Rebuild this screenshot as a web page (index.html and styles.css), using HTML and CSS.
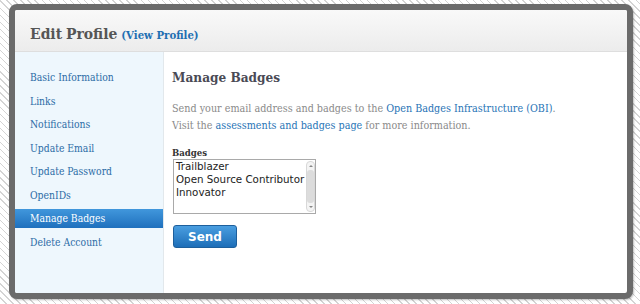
FILE: index.html
```html
<!DOCTYPE html>
<html>
<head>
<meta charset="utf-8">
<link rel="stylesheet" href="styles.css">
</head>
<body>
<div class="frame">
  <div class="header">
    <h1 class="title">Edit Profile <a class="view" href="#">(View Profile)</a></h1>
  </div>
  <div class="body">
    <nav class="side">
      <a class="item" href="#">Basic Information</a>
      <a class="item" href="#">Links</a>
      <a class="item" href="#">Notifications</a>
      <a class="item" href="#">Update Email</a>
      <a class="item" href="#">Update Password</a>
      <a class="item" href="#">OpenIDs</a>
      <a class="item active" href="#">Manage Badges</a>
      <a class="item" href="#">Delete Account</a>
    </nav>
    <main class="main">
      <h2 class="heading">Manage Badges</h2>
      <p class="desc">Send your email address and badges to the <a href="#">Open Badges Infrastructure (OBI)</a>.<br>Visit the <a href="#">assessments and badges page</a> for more information.</p>
      <div class="label">Badges</div>
      <div class="listbox">
        <div class="options">
          <div>Trailblazer</div>
          <div>Open Source Contributor</div>
          <div>Innovator</div>
        </div>
        <div class="scroll">
          <span class="arrow up"></span>
          <span class="thumb"></span>
          <span class="arrow down"></span>
        </div>
      </div>
      <button class="send">Send</button>
    </main>
  </div>
</div>
</body>
</html>
```
FILE: styles.css
```css
html, body {
  margin: 0;
  padding: 0;
  height: 100%;
}
body {
  width: 640px;
  height: 304px;
  background-color: #fff;
  background-image: repeating-linear-gradient(45deg, #fff 0, #fff 4px, #d4d4d4 4px, #d4d4d4 5px);
  padding: 4px 7px 0 9px;
  box-sizing: border-box;
  font-family: "DejaVu Serif", serif;
  font-stretch: condensed;
}
.frame {
  width: 624px;
  height: 295px;
  box-sizing: border-box;
  border: 6px solid #6b6b6b;
  border-radius: 8px;
  background: #fff;
  display: flex;
  flex-direction: column;
  overflow: hidden;
  box-shadow: 1px 1px 2px rgba(0,0,0,0.25);
}
.header {
  height: 42px;
  flex: none;
  box-sizing: border-box;
  background: linear-gradient(#f9f9f9, #ececec);
  border-bottom: 1px solid #dedede;
  display: flex;
  align-items: center;
  padding: 5px 0 0 15px;
}
.title {
  margin: 0;
  font-size: 15.5px;
  font-weight: bold;
  color: #555;
  word-spacing: -1px;
}
.view {
  color: #1f6fb2;
  font-size: 11.3px;
  text-decoration: none;
  word-spacing: 0;
}
.body {
  flex: 1;
  display: flex;
}
.side {
  width: 148px;
  flex: none;
  background: #eef7fd;
  border-right: 1px solid #e2e8ec;
  display: flex;
  flex-direction: column;
  padding-top: 16px;
}
.item {
  display: block;
  height: 19px;
  line-height: 19px;
  margin-bottom: 4.5px;
  padding-left: 15px;
  font-size: 10.3px;
  color: #2c6ca6;
  text-decoration: none;
}
.item.active {
  background: linear-gradient(#4197dc, #1f70bd);
  color: #fff;
}
.main {
  flex: 1;
  padding: 13px 8px 0 8px;
}
.heading {
  margin: 0;
  font-size: 13.5px;
  font-weight: bold;
  color: #4a4a55;
  line-height: 24px;
}
.desc {
  margin: 11px 0 0;
  font-size: 10.7px;
  line-height: 17px;
  color: #8a8a8a;
}
.desc a {
  color: #2874b6;
  text-decoration: none;
}
.label {
  margin-top: 13px;
  font-size: 9.5px;
  font-weight: bold;
  color: #333;
  line-height: 11px;
}
.listbox {
  margin-top: 1px;
  margin-left: 1px;
  width: 143px;
  height: 55px;
  box-sizing: border-box;
  border: 1px solid #a9a9a9;
  display: flex;
  background: #fff;
}
.options {
  flex: 1;
  padding: 0 2px;
  font-family: "DejaVu Sans", sans-serif;
  font-stretch: normal;
  font-size: 10.3px;
  line-height: 13px;
  color: #222;
  white-space: nowrap;
}
.scroll {
  width: 9px;
  margin: 1px 1px 1px 0;
  display: flex;
  flex-direction: column;
  align-items: center;
  border: 1px solid #d8d8d8;
  border-radius: 4px;
  background: #f4f4f4;
}
.arrow {
  width: 0;
  height: 0;
  border-left: 2px solid transparent;
  border-right: 2px solid transparent;
  margin: 3px 0;
}
.arrow.up { border-bottom: 2px solid #888; }
.arrow.down { border-top: 2px solid #888; }
.thumb {
  flex: 1;
  width: 7px;
  background: #dcdcdc;
  border-radius: 3px;
}
.send {
  display: block;
  margin-top: 11px;
  margin-left: 1px;
  width: 64px;
  height: 23px;
  border: 1px solid #1d5f9c;
  border-radius: 3px;
  background: linear-gradient(#4a9ee0, #1d6eb8);
  color: #fff;
  font-family: "DejaVu Sans", sans-serif;
  font-stretch: normal;
  font-weight: bold;
  font-size: 12px;
  padding: 0;
}
```
